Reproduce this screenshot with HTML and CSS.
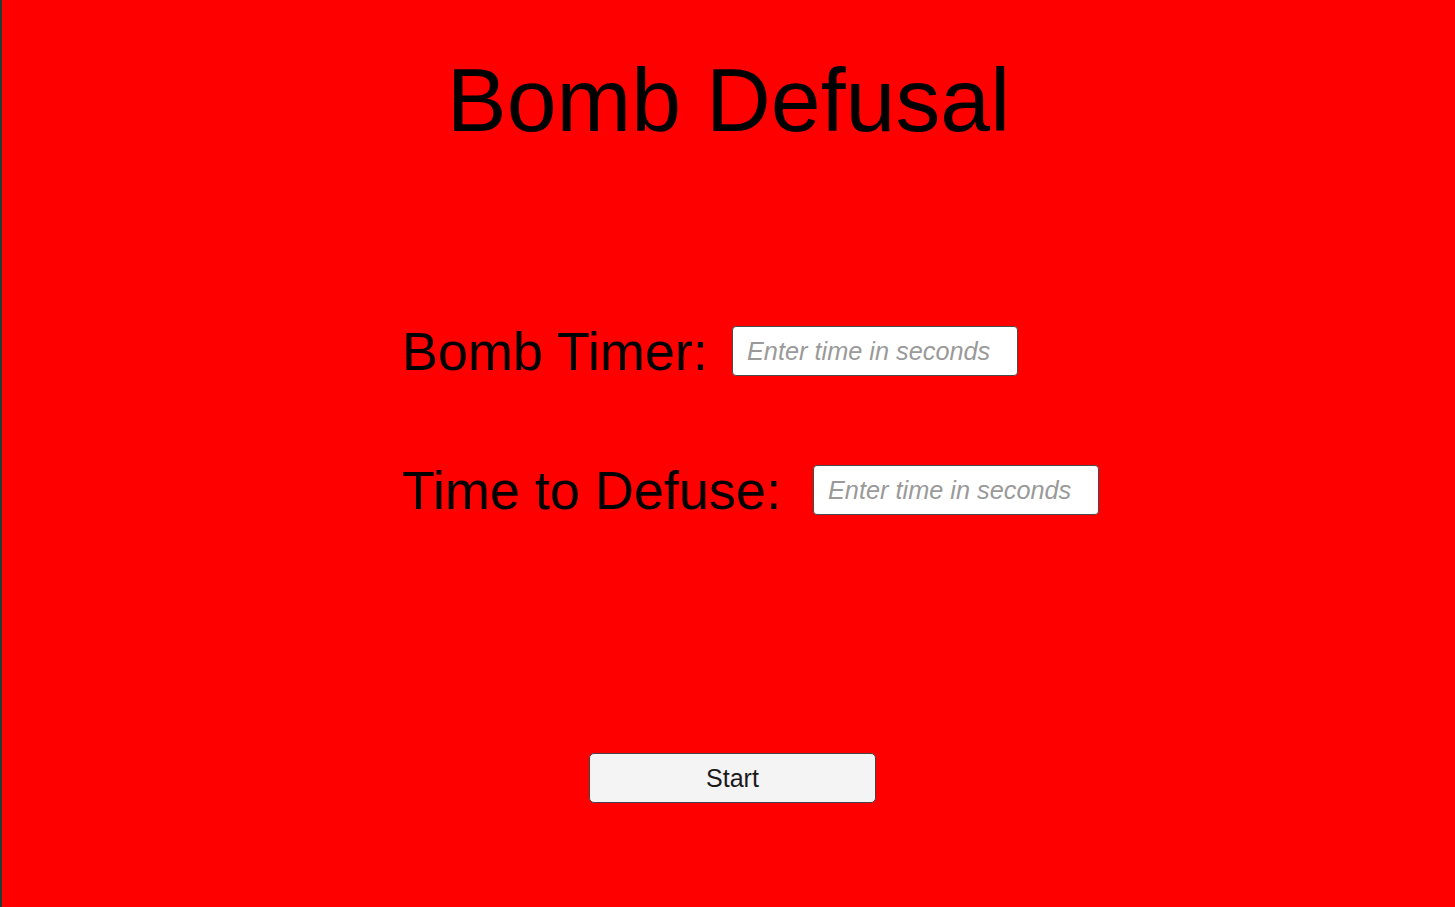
FILE: index.html
```html
<!DOCTYPE html>
<html lang="en">
<head>
<meta charset="utf-8">
<title>Bomb Defusal</title>
<link rel="stylesheet" href="styles.css">
</head>
<body>
<main class="screen">
  <h1 class="title">Bomb Defusal</h1>
  <div class="form">
    <div class="row">
      <label class="label label-timer" for="timer">Bomb Timer:</label>
      <input class="field" id="timer" type="text" placeholder="Enter time in seconds">
    </div>
    <div class="row">
      <label class="label label-defuse" for="defuse">Time to Defuse:</label>
      <input class="field" id="defuse" type="text" placeholder="Enter time in seconds">
    </div>
  </div>
  <button class="start" type="button">Start</button>
</main>
</body>
</html>
```

FILE: styles.css
```css
html, body {
  margin: 0;
  padding: 0;
  height: 100%;
}

body {
  background: #ff0000;
  border-left: 2px solid #243b33;
  box-sizing: border-box;
  font-family: "Liberation Sans", Arial, sans-serif;
  overflow: hidden;
}

.screen {
  display: flex;
  flex-direction: column;
  height: 100%;
}

.title {
  margin: 55px 0 0 0;
  font-size: 89.7px;
  line-height: 90px;
  font-weight: normal;
  color: #000;
  text-align: center;
}

.form {
  margin-top: 181px;
  padding-left: 400px;
  display: flex;
  flex-direction: column;
  gap: 89px;
}

.row {
  display: flex;
  align-items: center;
  height: 50px;
}

.label {
  font-size: 54px;
  line-height: 50px;
  color: #000;
  white-space: nowrap;
}

.label-timer {
  width: 330px;
}

.label-defuse {
  width: 411px;
}

.field {
  box-sizing: border-box;
  width: 286px;
  height: 50px;
  margin: 0;
  padding: 0 0 0 14px;
  background: #ffffff;
  border: 1px solid #4a4a4a;
  border-radius: 4px;
  font-family: "Liberation Sans", Arial, sans-serif;
  font-size: 25.3px;
  color: #222;
  outline: none;
}

.field::placeholder {
  color: #9a9a9a;
  font-style: italic;
  opacity: 1;
}

.start {
  box-sizing: border-box;
  margin: 238px 0 0 587px;
  width: 287px;
  height: 50px;
  padding: 0;
  background: #f4f4f4;
  border: 1px solid #444;
  border-radius: 5px;
  font-family: "Liberation Sans", Arial, sans-serif;
  font-size: 25px;
  color: #1a1a1a;
  cursor: pointer;
}
```
